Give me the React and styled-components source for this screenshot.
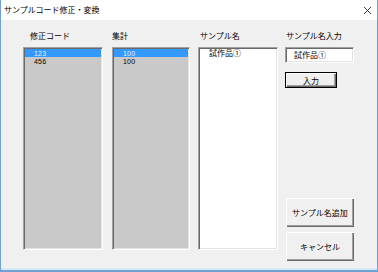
import styled, { createGlobalStyle } from 'styled-components';

const Global = createGlobalStyle`
  html, body {
    margin: 0;
    padding: 0;
    background: #ffffff;
  }
  body {
    font-family: "Noto Sans CJK JP", "DejaVu Sans", sans-serif;
    font-size: 8px;
    color: #000;
  }
`;

const Window = styled.div`
  box-sizing: border-box;
  width: 378px;
  height: 272px;
  display: flex;
  flex-direction: column;
  background: #f0f0f0;
  border-left: 1px solid #6ea2d6;
  border-right: 1px solid #6ea2d6;
  border-bottom: 2px solid #6ea2d6;
  box-shadow: inset 0 -2px 0 #d7e8f6;
  overflow: hidden;
`;

const TitleBar = styled.div`
  height: 20px;
  flex: none;
  display: flex;
  align-items: center;
  justify-content: space-between;
  padding: 0 5px 0 3px;
  background: #ffffff;
  font-size: 8px;
  line-height: 20px;
`;

const Client = styled.div`
  flex: 1;
  display: flex;
  align-items: flex-start;
  padding: 11px 0 0 22px;
`;

const Column = styled.div`
  display: flex;
  flex-direction: column;
  width: ${(p) => p.$width}px;
  margin-right: ${(p) => p.$gap || 0}px;
`;

const Label = styled.div`
  height: 10px;
  line-height: 10px;
  margin-bottom: 6px;
  padding-left: ${(p) => p.$indent || 0}px;
  white-space: nowrap;
`;

const ListBox = styled.div`
  box-sizing: border-box;
  height: 203px;
  background: ${(p) => (p.$disabled ? '#c9c9c9' : '#ffffff')};
  border-top: 1px solid #a0a0a0;
  border-left: 1px solid #a0a0a0;
  border-right: 1px solid #ffffff;
  border-bottom: 1px solid #ffffff;
  box-shadow: inset 1px 1px 0 #696969, inset -1px -1px 0 #e3e3e3;
  padding: 1px 1px;
`;

const Item = styled.div`
  height: 8px;
  line-height: 8px;
  padding-left: ${(p) => p.$indent || 9}px;
  background: ${(p) => (p.$selected ? '#3399ff' : 'transparent')};
  color: ${(p) => (p.$selected ? '#e8f2ff' : '#000')};
  white-space: nowrap;
`;

const Digits = styled.span`
  font-family: "Liberation Sans", Arial, sans-serif;
  font-size: 7px;
  letter-spacing: 0.2px;
`;

const TextBox = styled.div`
  box-sizing: border-box;
  height: 16px;
  width: 69px;
  background: #fff;
  border-top: 1px solid #a0a0a0;
  border-left: 1px solid #a0a0a0;
  border-right: 1px solid #ffffff;
  border-bottom: 1px solid #ffffff;
  box-shadow: inset 1px 1px 0 #696969, inset -1px -1px 0 #e3e3e3;
  padding-left: 8px;
  line-height: 13px;
`;

const Button = styled.button`
  box-sizing: border-box;
  width: ${(p) => p.$width}px;
  height: ${(p) => p.$height}px;
  margin-top: ${(p) => p.$top || 0}px;
  margin-left: ${(p) => p.$left || 0}px;
  padding: 0;
  font-family: "Noto Sans CJK JP", "DejaVu Sans", sans-serif;
  font-size: 8px;
  color: #000;
  background: #f0f0f0;
  border: ${(p) => (p.$default ? '1px solid #000' : '0')};
  box-shadow: inset 1px 1px 0 #ffffff, inset -1px -1px 0 #696969, inset -2px -2px 0 #a0a0a0;
`;

const Spacer = styled.div`
  height: ${(p) => p.$h}px;
`;

const Close = () => (
  <svg width="9" height="9" viewBox="0 0 9 9">
    <path d="M1 1 L8 8 M8 1 L1 8" stroke="#222" strokeWidth="0.9" fill="none" />
  </svg>
);

export default function App() {
  return (
    <>
      <Global />
      <Window>
        <TitleBar>
          <span>サンプルコード修正・変換</span>
          <Close />
        </TitleBar>
        <Client>
          <Column $width={80} $gap={9}>
            <Label $indent={7}>修正コード</Label>
            <ListBox $disabled>
              <Item $selected><Digits>123</Digits></Item>
              <Item><Digits>456</Digits></Item>
            </ListBox>
          </Column>
          <Column $width={78} $gap={8}>
            <Label>集計</Label>
            <ListBox $disabled>
              <Item $selected><Digits>100</Digits></Item>
              <Item><Digits>100</Digits></Item>
            </ListBox>
          </Column>
          <Column $width={80} $gap={7}>
            <Label $indent={2}>サンプル名</Label>
            <ListBox>
              <Item>試作品①</Item>
            </ListBox>
          </Column>
          <Column $width={70}>
            <Label $indent={1}>サンプル名入力</Label>
            <TextBox>試作品①</TextBox>
            <Button $default $width={52} $height={16} $top={9}>
              入力
            </Button>
            <Spacer $h={110} />
            <Button $width={68} $height={29} $left={1}>
              サンプル名追加
            </Button>
            <Button $width={68} $height={29} $top={5} $left={1}>
              キャンセル
            </Button>
          </Column>
        </Client>
      </Window>
    </>
  );
}
